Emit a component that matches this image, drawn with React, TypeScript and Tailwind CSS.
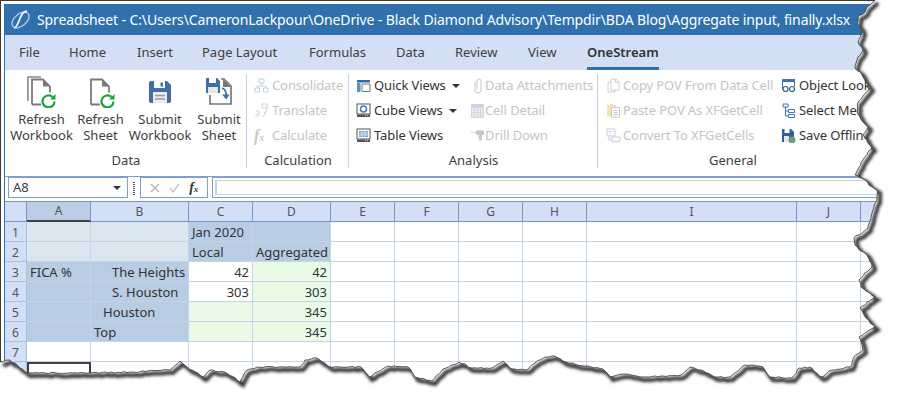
import type { ReactNode } from "react";

const font = "font-['Noto_Sans',sans-serif]";

const tabs = [
  { label: "File", w: "w-[50px]" },
  { label: "Home", w: "w-[68px]" },
  { label: "Insert", w: "w-[65px]" },
  { label: "Page Layout", w: "w-[107px]" },
  { label: "Formulas", w: "w-[87px]" },
  { label: "Data", w: "w-[59px]" },
  { label: "Review", w: "w-[73px]" },
  { label: "View", w: "w-[59px]" },
];

const columns = [
  { label: "A", w: 64 },
  { label: "B", w: 98 },
  { label: "C", w: 64 },
  { label: "D", w: 78 },
  { label: "E", w: 64 },
  { label: "F", w: 64 },
  { label: "G", w: 64 },
  { label: "H", w: 64 },
  { label: "I", w: 210 },
  { label: "J", w: 64 },
  { label: "K", w: 40 },
];

type Cell = { t?: string; cls?: string };

const HEAD = "bg-[#b8cce4]";
const PALE = "bg-[#dce6f1]";
const GREEN = "bg-[#e9fbe7]";

const rows: Record<number, Cell[]> = {
  1: [{ cls: PALE }, { cls: PALE }, { t: "Jan 2020", cls: `${HEAD} pl-[3px]` }, { cls: HEAD }],
  2: [{ cls: PALE }, { cls: PALE }, { t: "Local", cls: `${HEAD} pl-[3px]` }, { t: "Aggregated", cls: `${HEAD} pl-[3px]` }],
  3: [
    { t: "FICA %", cls: `${HEAD} pl-[3px]` },
    { t: "The Heights", cls: `${HEAD} pl-[21px]` },
    { t: "42", cls: "justify-end pr-[3px]" },
    { t: "42", cls: `${GREEN} justify-end pr-[3px]` },
  ],
  4: [
    { cls: HEAD },
    { t: "S. Houston", cls: `${HEAD} pl-[21px]` },
    { t: "303", cls: "justify-end pr-[3px]" },
    { t: "303", cls: `${GREEN} justify-end pr-[3px]` },
  ],
  5: [
    { cls: HEAD },
    { t: "Houston", cls: `${HEAD} pl-[12px]` },
    { cls: GREEN },
    { t: "345", cls: `${GREEN} justify-end pr-[3px]` },
  ],
  6: [
    { cls: HEAD },
    { t: "Top", cls: `${HEAD} pl-[3px]` },
    { cls: GREEN },
    { t: "345", cls: `${GREEN} justify-end pr-[3px]` },
  ],
  7: [],
  8: [],
};

// hand-traced outline of the torn edge, then roughened a little
const TRACE = [
  875, 0, 872, 3, 867, 7, 865, 12, 858, 17, 857, 23, 862, 32, 858, 42, 863, 50, 857, 60, 855, 68, 862, 75, 870, 88, 858,
  102, 857, 112, 863, 122, 868, 127, 863, 135, 872, 148, 863, 160, 855, 175, 865, 180, 872, 187, 877, 190, 877, 200, 872,
  213, 868, 228, 854, 238, 855, 245, 868, 257, 872, 267, 859, 280, 861, 287, 875, 297, 860, 308, 866, 318, 875, 327, 859,
  337, 863, 350, 854, 357, 850, 367, 832, 370, 821, 377, 810, 367, 799, 368, 792, 378, 770, 377, 763, 367, 745, 365, 730,
  377, 715, 377, 701, 370, 690, 367, 681, 375, 643, 377, 625, 374, 610, 377, 603, 369, 585, 366, 566, 362, 554, 356, 545,
  357, 535, 363, 526, 370, 512, 369, 503, 361, 492, 368, 472, 368, 459, 362, 443, 369, 432, 381, 415, 377, 408, 367, 388,
  366, 369, 377, 361, 367, 341, 367, 330, 367, 317, 358, 305, 360, 300, 367, 257, 367, 247, 370, 240, 382, 225, 372, 210,
  370, 203, 377, 187, 367, 180, 361, 170, 370, 133, 372, 90, 373, 27, 373, 20, 368, 10, 360, 0, 362,
];

function roughen(pts: number[]) {
  const out: string[] = [];
  let n = 0;
  for (let i = 0; i + 3 < pts.length; i += 2) {
    const [x0, y0, x1, y1] = [pts[i], pts[i + 1], pts[i + 2], pts[i + 3]];
    const steps = Math.max(1, Math.round(Math.hypot(x1 - x0, y1 - y0) / 3));
    for (let s = 0; s < steps; s++) {
      n++;
      const r = Math.sin(n * 12.9898) * 43758.5453;
      const q = Math.sin(n * 78.233) * 12543.1234;
      const dx = (r - Math.floor(r) - 0.5) * 1.4;
      const dy = (q - Math.floor(q) - 0.5) * 1.4;
      const x = x0 + ((x1 - x0) * s) / steps + (s ? dx : 0);
      const y = y0 + ((y1 - y0) * s) / steps + (s ? dy : 0);
      out.push(`${x.toFixed(1)} ${y.toFixed(1)}`);
    }
  }
  out.push(`${pts[pts.length - 2]} ${pts[pts.length - 1]}`);
  return `M${out.join("L")}`;
}

const EDGE = roughen(TRACE);
const OUTSIDE = `${EDGE}L0 403 899 403 899 0Z`;

function RefreshIcon({ stacked }: { stacked?: boolean }) {
  return (
    <svg width="30" height="32" viewBox="0 0 30 32" fill="none" className="shrink-0">
      {stacked && <path d="M1 25V1h13" stroke="#8a8a8a" strokeWidth="1.6" />}
      <path d="M5 28.5V3.5h11l7 7v6M5 28.5h9" stroke="#7a7a7a" strokeWidth="1.8" />
      <path d="M16 3.5l7 7h-7z" fill="#7a7a7a" />
      <path d="M27.5 25.5a6 6 0 1 1-2-4.6" stroke="#17a336" strokeWidth="2.2" />
      <path d="M28.5 18v5.5h-5.5z" fill="#17a336" />
    </svg>
  );
}

function Floppy() {
  return (
    <svg width="22" height="22" viewBox="0 0 22 22" className="mb-[5px]">
      <path d="M0 2a2 2 0 0 1 2-2h16l4 4v16a2 2 0 0 1-2 2H2a2 2 0 0 1-2-2z" fill="#3f6fa3" />
      <rect x="5" y="0" width="11" height="7" fill="#fff" />
      <rect x="11.5" y="1.5" width="2.5" height="4" fill="#3f6fa3" />
      <rect x="4" y="11" width="14" height="11" fill="#ececec" />
      <path d="M6 14.5h10M6 18h10" stroke="#9a9a9a" strokeWidth="1.5" />
    </svg>
  );
}

function SubmitSheetIcon() {
  return (
    <svg width="26" height="27" viewBox="0 0 26 27" fill="none" className="mb-[3px]">
      <path d="M15 1h3l7 7v18H4v-9" stroke="#777" strokeWidth="1.7" />
      <path d="M17 1l8 8h-8z" fill="#777" />
      <path d="M0 1a1 1 0 0 1 1-1h10l3 3v12H0z" fill="#3f6fa3" />
      <rect x="3" y="0" width="7" height="5" fill="#fff" />
      <rect x="2" y="9" width="10" height="6" fill="#e7e7e7" />
      <path d="M16 10c3 1 4.5 4 4 8" stroke="#3f6fa3" strokeWidth="1.7" />
      <path d="M16 16.5h7.5l-3.2 5z" fill="#3f6fa3" />
    </svg>
  );
}

function BigButton({ icon, top, bottom, w }: { icon: ReactNode; top: string; bottom: string; w: string }) {
  return (
    <div className={`flex ${w} flex-col items-center`}>
      <div className="flex h-[38px] items-end pb-[3px]">{icon}</div>
      <p className="text-[13px] leading-[16px] text-[#404040]">{top}</p>
      <p className="text-[13px] leading-[16px] text-[#404040]">{bottom}</p>
    </div>
  );
}

function SmallItem({
  icon,
  label,
  off,
  caret,
  iconW = "w-[18px]",
}: {
  icon: ReactNode;
  label: string;
  off?: boolean;
  caret?: boolean;
  iconW?: string;
}) {
  return (
    <div className="flex h-[25px] items-center">
      <span className={`flex ${iconW} shrink-0 items-center`}>{icon}</span>
      <span className={`whitespace-nowrap text-[13px] tracking-[-0.1px] ${off ? "text-[#c4c4c4]" : "text-[#333]"}`}>{label}</span>
      {caret && <span className="ml-[6px] h-0 w-0 border-x-[4px] border-t-[4px] border-x-transparent border-t-[#333]" />}
    </div>
  );
}

function Group({ label, w, children, border = true }: { label: string; w: string; children: ReactNode; border?: boolean }) {
  return (
    <div className={`relative flex ${w} shrink-0 flex-col`}>
      <div className="flex h-[78px]">{children}</div>
      <p className="text-center text-[13px] leading-[18px] text-[#404040]">{label}</p>
      {border && <span className="absolute right-0 top-[1px] h-[94px] w-px bg-[#c3d1e6]" />}
    </div>
  );
}

const S = (p: { children: ReactNode }) => (
  <svg width="15" height="15" viewBox="0 0 15 15" fill="none">
    {p.children}
  </svg>
);

export default function App() {
  return (
    <div className={`relative h-[403px] w-[899px] overflow-hidden bg-white ${font}`}>
      <div className="flex h-[403px] flex-col border-t border-l border-t-[#3a3a3a] border-l-[#3a3a3a] pl-[3px] pt-[3px]">
        <div className="flex flex-col border-l border-[#2f70ad]">
          {/* title bar */}
          <div className="flex h-[31px] items-center bg-[#2f70ad] pl-[5px] text-[14px] tracking-[-0.12px] text-white">
            <svg width="21" height="20" viewBox="0 0 21 20" fill="none" className="mr-[6px] shrink-0">
              <ellipse cx="10.5" cy="10" rx="10" ry="6" stroke="#b9cbe2" strokeWidth="1.3" transform="rotate(-40 10.5 10)" />
              <path d="M4 18c2 0 3-2 5-7s3-9 8-10" stroke="#f2f5fa" strokeWidth="1.8" />
            </svg>
            <span className="whitespace-nowrap">
              Spreadsheet - C:\Users\CameronLackpour\OneDrive - Black Diamond Advisory\Tempdir\BDA Blog\Aggregate input, finally.xlsx
            </span>
          </div>
          {/* tabs */}
          <div className="flex h-[35px] items-center bg-[#d2dff5] pl-[14px] text-[13px] text-[#404040]">
            {tabs.map((t) => (
              <span key={t.label} className={t.w}>
                {t.label}
              </span>
            ))}
            <span className="flex h-[35px] flex-col justify-center border-b-[3px] border-[#2f70ad] pt-[3px] font-semibold text-[#333]">
              OneStream
            </span>
          </div>
          {/* ribbon */}
          <div className="flex h-[106px] pt-[3px]">
            <Group label="Data" w="w-[242px]">
              <div className="flex pl-[4px]">
                <BigButton w="w-[65px]" top="Refresh" bottom="Workbook" icon={<RefreshIcon stacked />} />
                <BigButton w="w-[53px]" top="Refresh" bottom="Sheet" icon={<RefreshIcon />} />
                <BigButton w="w-[66px]" top="Submit" bottom="Workbook" icon={<Floppy />} />
                <BigButton w="w-[52px]" top="Submit" bottom="Sheet" icon={<SubmitSheetIcon />} />
              </div>
            </Group>
            <Group label="Calculation" w="w-[102px]">
              <div className="flex flex-col pl-[7px]">
                <SmallItem
                  off
                  label="Consolidate"
                  icon={
                    <S>
                      <path d="M5 1h5v4H5zM1 10h4.5v4H1zM9.5 10H14v4H9.5zM7.5 5v3M3 10V8h9v2" stroke="#c6cfdd" />
                    </S>
                  }
                />
                <SmallItem
                  off
                  label="Translate"
                  icon={
                    <S>
                      <path d="M2 8.500c1-1 3-1 3 .5v4M5 10.500c-2-.5-3.500.5-3 2s2.500.5 3-.5" stroke="#d3cde6" />
                      <path d="M8 1h5v4H8zM13 5c0 2-1 4-3 5M9 14l3-5" stroke="#cfc9df" />
                    </S>
                  }
                />
                <SmallItem
                  off
                  label="Calculate"
                  icon={
                    <span className="font-['Liberation_Serif',serif] text-[16px] font-bold italic leading-none text-[#cacaca]">
                      f<span className="text-[10px]">x</span>
                    </span>
                  }
                />
              </div>
            </Group>
            <Group label="Analysis" w="w-[249px]">
              <div className="flex w-[122px] shrink-0 flex-col pl-[7px]">
                <SmallItem
                  caret
                  label="Quick Views"
                  icon={
                    <S>
                      <path d="M1 2h13v2.500H1z" fill="#2f6ba8" />
                      <path d="M1 5h3.500v9H1z" fill="#5b8fc4" />
                      <path d="M6 6h8v7.500H6z" stroke="#777" />
                    </S>
                  }
                />
                <SmallItem
                  caret
                  label="Cube Views"
                  icon={
                    <S>
                      <rect x="1" y="1" width="13" height="10" fill="#fff" stroke="#555" />
                      <circle cx="7.500" cy="6" r="3" stroke="#3f7fbe" strokeWidth="1.6" />
                      <path d="M1 11.500h13V14H1z" fill="#555" />
                      <path d="M9 12.500h4" stroke="#ccc" strokeDasharray="1 1" />
                    </S>
                  }
                />
                <SmallItem
                  label="Table Views"
                  icon={
                    <S>
                      <rect x="1" y="1" width="13" height="10" fill="#fff" stroke="#555" />
                      <path d="M3 3h9v6H3z" fill="#6f9fd0" />
                      <path d="M3 5h9M3 7h9M6 3v6M9 3v6" stroke="#fff" strokeWidth=".7" />
                      <path d="M1 11.500h13V14H1z" fill="#555" />
                      <path d="M9 12.500h4" stroke="#ccc" strokeDasharray="1 1" />
                    </S>
                  }
                />
              </div>
              <div className="flex flex-col">
                <SmallItem
                  off
                  iconW="w-[14px]"
                  label="Data Attachments"
                  icon={
                    <svg width="10" height="16" viewBox="0 0 10 16" fill="none" className="ml-[2px]">
                      <path d="M2 4v8a3 3 0 0 0 6 0V3a2 2 0 0 0-4 0v8" stroke="#c8c8c8" />
                    </svg>
                  }
                />
                <SmallItem
                  off
                  iconW="w-[14px]"
                  label="Cell Detail"
                  icon={
                    <svg width="13" height="14" viewBox="0 0 13 14" fill="none">
                      <path d="M0 0h13v3H0z" fill="#c3d3e8" />
                      <path d="M.5 3.500h12v10H.5z" fill="#eee" stroke="#d4d4d4" />
                      <path d="M.5 6h12M.5 8.500h12M.5 11h12M3.500 3.500v10M6.500 3.500v10M9.500 3.500v10" stroke="#d4d4d4" strokeWidth=".8" />
                    </svg>
                  }
                />
                <SmallItem
                  off
                  iconW="w-[14px]"
                  label="Drill Down"
                  icon={
                    <svg width="13" height="11" viewBox="0 0 13 11" fill="none">
                      <path d="M0 2.500h5" stroke="#d5d5d5" strokeWidth="1.500" strokeDasharray="2 1" />
                      <path d="M5 .500h8v4.500h-2v5.500H8L7.500 5H5z" fill="#c8c8c8" />
                    </svg>
                  }
                />
              </div>
            </Group>
            <Group label="General" w="w-[270px]" border={false}>
              <div className="flex w-[183px] shrink-0 flex-col pl-[8px]">
                <SmallItem
                  off
                  iconW="w-[17px]"
                  label="Copy POV From Data Cell"
                  icon={
                    <S>
                      <path d="M5 1h5l3 3v8H5z" stroke="#cfcfcf" fill="#fff" />
                      <path d="M9.500 1v3.500H13M5 4H2v10h7v-2" stroke="#cfcfcf" />
                    </S>
                  }
                />
                <SmallItem
                  off
                  iconW="w-[17px]"
                  label="Paste POV As XFGetCell"
                  icon={
                    <S>
                      <path d="M1 2h9v11H1z" fill="#f7e2ae" />
                      <path d="M4 1h3v2H4z" fill="#ddd" />
                      <path d="M5.500 4.500h8v9.500h-8z" fill="#fff" stroke="#c8c8c8" />
                      <path d="M7.500 7.500h4M7.500 9.500h4M7.500 11.500h4" stroke="#c8c8c8" />
                    </S>
                  }
                />
                <SmallItem
                  off
                  iconW="w-[17px]"
                  label="Convert To XFGetCells"
                  icon={
                    <S>
                      <path d="M1 1h8v7H1z" stroke="#c8cfda" fill="#fff" />
                      <path d="M1 3.500h8M4 1v7" stroke="#dde3ec" />
                      <path d="M6 9h8v4.500H6z" stroke="#c8cfda" fill="#fff" />
                      <path d="M3 9v3h3" stroke="#b9c8de" />
                    </S>
                  }
                />
              </div>
              <div className="flex flex-col">
                <SmallItem
                  label="Object Lookup"
                  icon={
                    <S>
                      <path d="M1 1h13v3H1z" fill="#3f75ad" />
                      <path d="M1.500 1.500v10M13.500 1.500v7" stroke="#3f75ad" />
                      <circle cx="4.500" cy="11" r="2.500" stroke="#2f5f8f" strokeWidth="1.200" fill="#fff" />
                      <circle cx="11" cy="11" r="2.500" stroke="#2f5f8f" strokeWidth="1.200" fill="#fff" />
                    </S>
                  }
                />
                <SmallItem
                  label="Select Member"
                  icon={
                    <S>
                      <path d="M2 1h5v3H2zM7.500 6.500h6v3h-6zM7.500 11.500h6v3h-6zM4.500 4v9h3M4.500 8h3" stroke="#3f75ad" />
                    </S>
                  }
                />
                <SmallItem
                  label="Save Offline"
                  icon={
                    <S>
                      <path d="M1 1h9l3 3v10H1z" fill="#2f5f96" />
                      <rect x="3.500" y="1" width="5" height="4" fill="#fff" />
                      <rect x="3" y="8" width="5" height="6" fill="#e7e7e7" />
                      <circle cx="11" cy="12" r="3.500" fill="#6a9f86" />
                    </S>
                  }
                />
              </div>
            </Group>
          </div>
          {/* formula bar */}
          <div className="flex h-[25px] items-start border-t border-[#7f9fd0] pl-[3px] text-[#404040]">
            <div className="flex h-[21px] w-[120px] items-center border border-[#7f9fd0] pl-[4px] text-[13px]">
              <span className="flex-1">A8</span>
              <span className="mr-[6px] h-0 w-0 border-x-[4px] border-t-[4px] border-x-transparent border-t-[#333]" />
            </div>
            <div className="mx-[5px] h-[14px] w-[2px] self-center bg-[repeating-linear-gradient(#555_0_1px,transparent_1px_2px)]" />
            <div className="flex h-[21px] w-[68px] items-center justify-around border border-[#7f9fd0] px-[4px]">
              <svg width="10" height="10" viewBox="0 0 10 10" stroke="#b5b5b5" strokeWidth="1.3">
                <path d="M1 1l8 8M9 1l-8 8" />
              </svg>
              <svg width="11" height="10" viewBox="0 0 11 10" fill="none" stroke="#c5c5c5" strokeWidth="1.3">
                <path d="M1 5l3 4 6-8" />
              </svg>
              <span className="font-['Liberation_Serif',serif] text-[14px] font-bold italic leading-none text-[#333]">
                f<span className="text-[9px]">x</span>
              </span>
            </div>
            <div className="ml-[4px] h-[21px] flex-1 border-y border-l border-[#7f9fd0] p-[2px]">
              <div className="h-full border-y border-l-2 border-[#c5d2e8]" />
            </div>
          </div>
          {/* sheet */}
          <div className="flex flex-col">
            <div className="flex h-[21px]">
              <div className="w-[22px] shrink-0 border-y border-r border-[#7596cc] bg-[#d2dff5]" />
              {columns.map((c, i) => (
                <div
                  key={c.label}
                  style={{ width: c.w }}
                  className={`flex shrink-0 items-center justify-center border-y border-r border-[#7596cc] text-[12px] ${
                    i === 0 ? "border-b-2 border-b-[#404040] bg-[#bdcde6]" : "bg-[#d2dff5]"
                  } text-[#555]`}
                >
                  {c.label === "K" ? "" : c.label}
                </div>
              ))}
            </div>
            {[1, 2, 3, 4, 5, 6, 7, 8].map((r) => (
              <div key={r} className="flex h-[20px]">
                <div className="flex w-[22px] shrink-0 items-center justify-center border-b border-r border-[#a9bfe3] bg-[#d2dff5] pt-[2px] text-[12px] text-[#555]">
                  {r < 8 ? r : ""}
                </div>
                {columns.map((c, i) => {
                  const cell = rows[r][i];
                  const edge =
                    r === 8 && i === 0 ? "border-2 border-[#404040]" : "border-b border-r border-[#c5d2e8]";
                  return (
                    <div
                      key={c.label}
                      style={{ width: c.w }}
                      className={`flex shrink-0 items-center whitespace-nowrap pt-[3px] text-[13px] text-[#333] ${edge} ${cell?.cls ?? ""}`}
                    >
                      {cell?.t}
                    </div>
                  );
                })}
              </div>
            ))}
          </div>
        </div>
      </div>

      {/* torn paper edge over the window */}
      <svg width="899" height="403" viewBox="0 0 899 403" className="absolute left-0 top-0">
        <defs>
          <filter id="blur" x="-5%" y="-5%" width="110%" height="110%">
            <feGaussianBlur stdDeviation="1.6" />
          </filter>
          <clipPath id="outside">
            <path d={OUTSIDE} />
          </clipPath>
        </defs>
        <path d={OUTSIDE} fill="#fff" />
        <g clipPath="url(#outside)">
          <path d={EDGE} fill="none" stroke="#333" strokeWidth="4" filter="url(#blur)" transform="translate(3 3)" />
        </g>
        <path d={EDGE} fill="none" stroke="#333" strokeWidth="0.8" />
      </svg>
    </div>
  );
}
